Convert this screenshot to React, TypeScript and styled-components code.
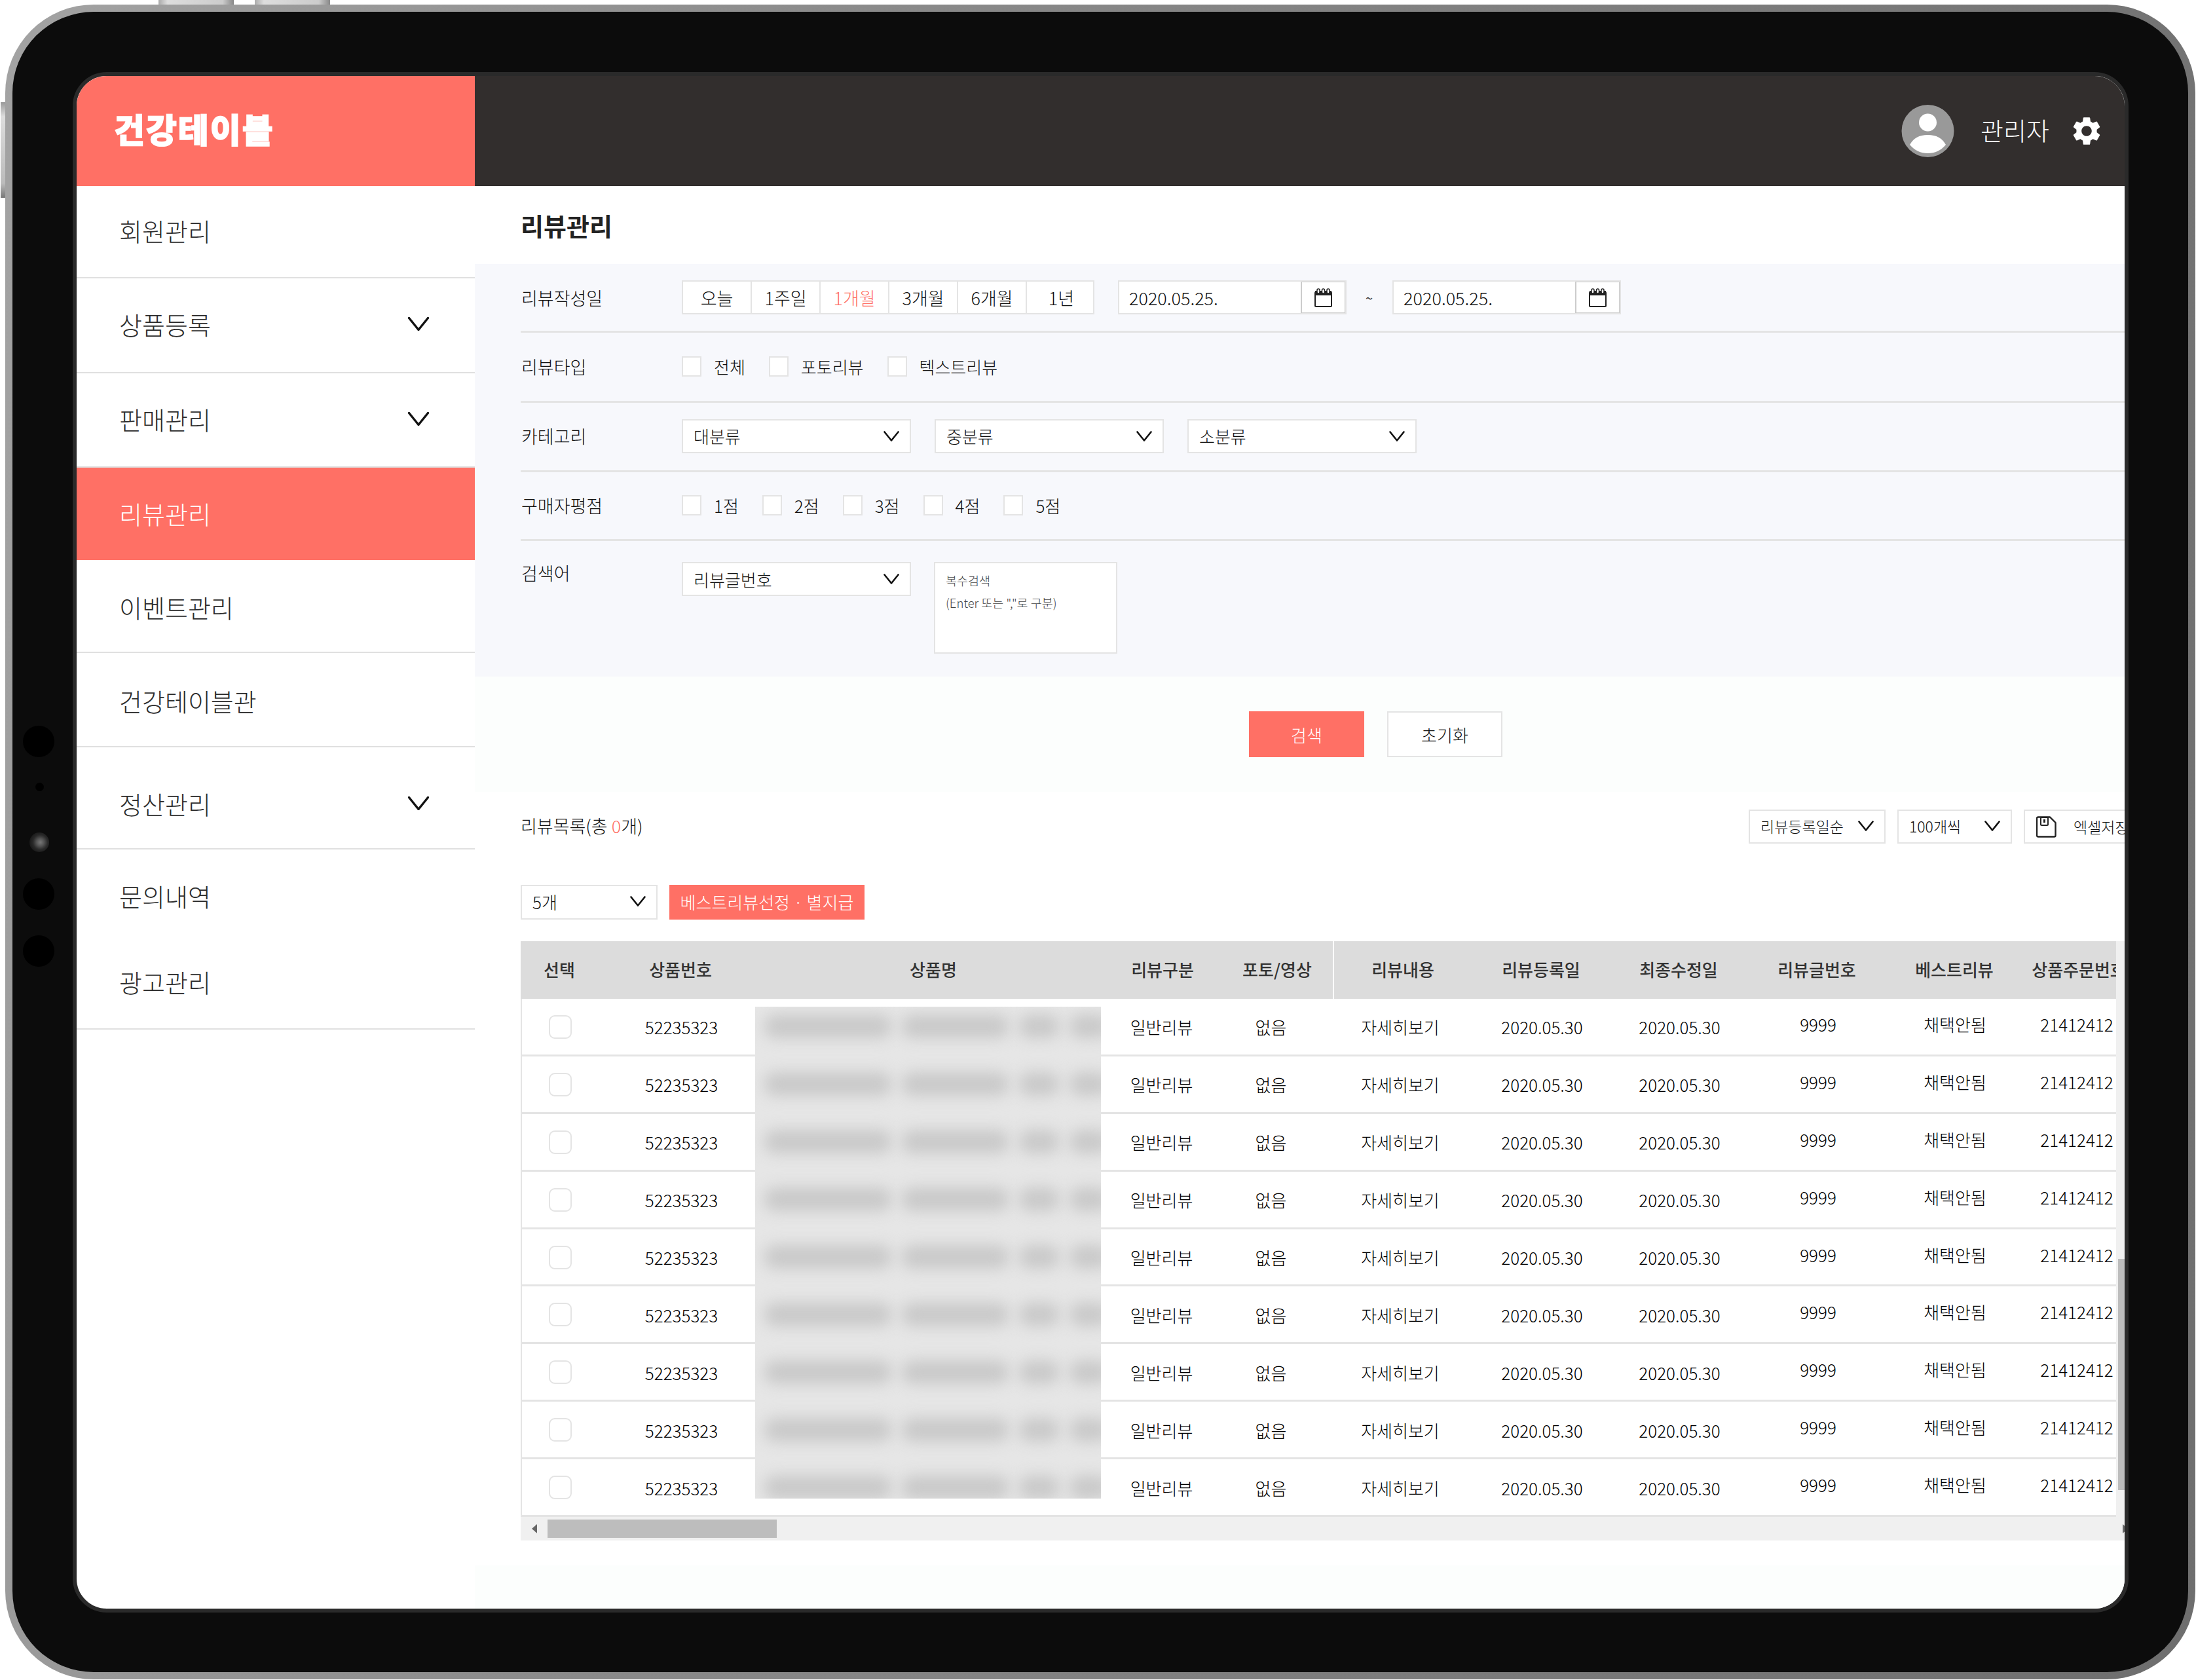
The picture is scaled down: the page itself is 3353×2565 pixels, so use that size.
import styled, {createGlobalStyle} from "styled-components";
import {MdSettings} from "react-icons/md";

const CORAL = "#ff7065";
const LINE = "#e4e4e4";

const GlobalStyle = createGlobalStyle`
  * { box-sizing: border-box; }
  body {
    margin: 0;
    background: #fff;
    color: #111;
    font-family: "Noto Sans CJK KR", "Noto Sans", sans-serif;
    font-weight: 400;
  }
`;

const Chevron = ({w = 24, h = 16, stroke = 2.6}: {w?: number; h?: number; stroke?: number}) => (
  <svg width={w} height={h} viewBox={`0 0 ${w} ${h}`} fill="none">
    <polyline
      points={`1.5,1.5 ${w / 2},${h - 1.5} ${w - 1.5},1.5`}
      stroke="#111"
      strokeWidth={stroke}
      strokeLinecap="round"
      strokeLinejoin="round"
    />
  </svg>
);

const CalendarIcon = () => (
  <svg width="27" height="29" viewBox="0 0 27 29" fill="none" stroke="#222">
    <rect x="1" y="6" width="25" height="22" rx="1" strokeWidth="2"/>
    <rect x="1" y="4" width="25" height="7" fill="#222" stroke="none"/>
    <rect x="4" y="1" width="4" height="7" rx="2" fill="#fff" strokeWidth="1.5"/>
    <rect x="11.5" y="1" width="4" height="7" rx="2" fill="#fff" strokeWidth="1.5"/>
    <rect x="19" y="1" width="4" height="7" rx="2" fill="#fff" strokeWidth="1.5"/>
  </svg>
);

const SaveIcon = () => (
  <svg width="31" height="33" viewBox="0 0 31 33" fill="none" stroke="#222" strokeWidth="2.4">
    <path d="M3 1.5 H21 L29.5 10 V29.5 a2 2 0 0 1 -2 2 H3 a2 2 0 0 1 -2 -2 V3.5 a2 2 0 0 1 2 -2 Z" strokeLinejoin="round"/>
    <rect x="7" y="2" width="11" height="12" rx="1.5" strokeWidth="2"/>
    <rect x="11" y="5" width="3" height="5" fill="#222" stroke="none"/>
  </svg>
);

const Avatar = () => (
  <svg width="81" height="80" viewBox="0 0 81 80">
    <circle cx="40.5" cy="40" r="40" fill="#999"/>
    <circle cx="40.5" cy="27" r="13.5" fill="#fff"/>
    <path d="M13 61 Q21 46 40.5 46 Q60 46 68 61 Q57 74 40.5 74 Q24 74 13 61 Z" fill="#fff"/>
  </svg>
);

const NAV = [
  {label: "회원관리", h: 141, dy: -2},
  {label: "상품등록", h: 145, dy: -2, arrow: true},
  {label: "판매관리", h: 144, dy: -2, arrow: true},
  {label: "리뷰관리", h: 141, dy: 0, active: true},
  {label: "이벤트관리", h: 142, dy: 1},
  {label: "건강테이블관", h: 144, dy: 1},
  {label: "정산관리", h: 156, dy: 8, arrow: true},
  {label: "문의내역", h: 138, dy: 2, noLine: true},
  {label: "광고관리", h: 137, dy: -4},
];

const PERIODS = ["오늘", "1주일", "1개월", "3개월", "6개월", "1년"];
const REVIEW_TYPES = ["전체", "포토리뷰", "텍스트리뷰"];
const RATINGS = ["1점", "2점", "3점", "4점", "5점"];
const CATEGORIES = ["대분류", "중분류", "소분류"];

const COLUMNS = [
  "선택", "상품번호", "상품명", "리뷰구분", "포토/영상", "리뷰내용",
  "리뷰등록일", "최종수정일", "리뷰글번호", "베스트리뷰", "상품주문번호",
];

const ROWS = Array.from({length: 9}, (_, i) => i);
const BLOBS = [194, 163, 61, 60];

export default function App() {
  return (
    <>
      <GlobalStyle/>
      <Device>
        <TopButton $left={234}/>
        <TopButton $left={381}/>
        <SideButton/>
        <Sensor $top={1101} $size={48} $left={27}/>
        <Sensor $top={1188} $size={13} $left={46}/>
        <Lens/>
        <Sensor $top={1334} $size={48} $left={27}/>
        <Sensor $top={1421} $size={48} $left={27}/>
        <Bezel>
          <Screen>
            <Sidebar>
              <Logo><LogoText>건강테이블</LogoText></Logo>
              {NAV.map((item) => (
                <NavItem key={item.label} $h={item.h} $dy={item.dy} $active={item.active} $noLine={item.noLine}>
                  {item.label}
                  {item.arrow ? <Chevron w={32} h={21} stroke={3.4}/> : undefined}
                </NavItem>
              ))}
            </Sidebar>
            <Main>
              <TopBar>
                <Avatar/>
                <AdminName>관리자</AdminName>
                <MdSettings size={52} color="#fff"/>
              </TopBar>
              <PageTitle>리뷰관리</PageTitle>
              <Filter>
                <FilterRow $h={105} $flat>
                  <FilterLabel>리뷰작성일</FilterLabel>
                  <PeriodGroup>
                    {PERIODS.map((p) => <Period key={p} $on={p === "1개월"}>{p}</Period>)}
                  </PeriodGroup>
                  <DateField>
                    <DateText>2020.05.25.</DateText>
                    <DateButton><CalendarIcon/></DateButton>
                  </DateField>
                  <Tilde>~</Tilde>
                  <DateField>
                    <DateText>2020.05.25.</DateText>
                    <DateButton><CalendarIcon/></DateButton>
                  </DateField>
                </FilterRow>
                <FilterRow $h={107}>
                  <FilterLabel>리뷰타입</FilterLabel>
                  <CheckGroup>
                    {REVIEW_TYPES.map((t) => <CheckItem key={t}><Check/>{t}</CheckItem>)}
                  </CheckGroup>
                </FilterRow>
                <FilterRow $h={106}>
                  <FilterLabel>카테고리</FilterLabel>
                  <SelectGroup>
                    {CATEGORIES.map((c) => <Select key={c} $w={350}>{c}<Chevron/></Select>)}
                  </SelectGroup>
                </FilterRow>
                <FilterRow $h={105}>
                  <FilterLabel>구매자평점</FilterLabel>
                  <CheckGroup>
                    {RATINGS.map((t) => <CheckItem key={t}><Check/>{t}</CheckItem>)}
                  </CheckGroup>
                </FilterRow>
                <SearchRow>
                  <SearchLabel>검색어</SearchLabel>
                  <Select $w={350}>리뷰글번호<Chevron/></Select>
                  <SearchBox>
                    <span>복수검색</span>
                    <span>(Enter 또는 ","로 구분)</span>
                  </SearchBox>
                </SearchRow>
              </Filter>
              <Actions>
                <SearchButton>검색</SearchButton>
                <ResetButton>초기화</ResetButton>
              </Actions>
              <ListHead>
                <ListTitle>리뷰목록(총 <Accent>0</Accent>개)</ListTitle>
                <ListControls>
                  <SmallSelect $w={209}>리뷰등록일순<Chevron/></SmallSelect>
                  <SmallSelect $w={175}>100개씩<Chevron/></SmallSelect>
                  <ExcelButton><SaveIcon/>엑셀저장</ExcelButton>
                </ListControls>
              </ListHead>
              <Toolbar>
                <ToolbarSelect $w={209} $h={53}>5개<Chevron/></ToolbarSelect>
                <BestButton>베스트리뷰선정 · 별지급</BestButton>
              </Toolbar>
              <TableWrap>
                <TableView>
                  <HeadRow>
                    {COLUMNS.map((c) => <HeadCell key={c} $divider={c === "포토/영상"}>{c}</HeadCell>)}
                  </HeadRow>
                  {ROWS.map((i) => (
                    <BodyRow key={i}>
                      <Cell $pr={3}><RowCheck/></Cell>
                      <Cell $pr={3}>52235323</Cell>
                      <Cell/>
                      <Cell $pr={9}>일반리뷰</Cell>
                      <Cell $pr={25}>없음</Cell>
                      <Cell $pr={14}>자세히보기</Cell>
                      <Cell $pr={3}>2020.05.30</Cell>
                      <Cell $pr={3}>2020.05.30</Cell>
                      <Cell $raised $pr={2}>9999</Cell>
                      <Cell $raised $pr={4}>채택안됨</Cell>
                      <Cell $raised $pr={4}>21412412</Cell>
                    </BodyRow>
                  ))}
                </TableView>
                <BlurPanel>
                  {ROWS.map((i) => (
                    <BlurRow key={i}>
                      {BLOBS.map((w, j) => <Blob key={j} $w={w}/>)}
                    </BlurRow>
                  ))}
                </BlurPanel>
                <VTrack><VThumb/></VTrack>
                <HTrack>
                  <HArrow/>
                  <HThumb/>
                  <HArrow $right/>
                </HTrack>
              </TableWrap>
              <BottomBand/>
            </Main>
          </Screen>
        </Bezel>
      </Device>
    </>
  );
}

const Device = styled.div`
  position: relative;
  width: 3344px;
  height: 2557px;
  margin: 7px 0 0 8px;
  padding: 11px;
  border-radius: 135px;
  background: linear-gradient(100deg, #a3a3a3 0%, #8a8a8a 35%, #6e6e6e 100%);
`;

const TopButton = styled.div<{$left: number}>`
  position: absolute;
  top: -7px;
  left: ${(p) => p.$left}px;
  width: 115px;
  height: 7px;
  background: linear-gradient(90deg, #aaa, #ddd 12%, #ccc 85%, #888);
`;

const SideButton = styled.div`
  position: absolute;
  top: 149px;
  left: -7px;
  width: 7px;
  height: 146px;
  background: linear-gradient(180deg, #999, #ddd 15%, #bbb 85%, #777);
`;

const Sensor = styled.div<{$top: number; $left: number; $size: number}>`
  position: absolute;
  z-index: 1;
  top: ${(p) => p.$top}px;
  left: ${(p) => p.$left}px;
  width: ${(p) => p.$size}px;
  height: ${(p) => p.$size}px;
  border-radius: 50%;
  background: #000;
`;

const Lens = styled.div`
  position: absolute;
  z-index: 1;
  top: 1264px;
  left: 37px;
  width: 30px;
  height: 30px;
  border-radius: 50%;
  background: radial-gradient(circle at 55% 50%, #777 0%, #555 25%, #2a2a2a 50%, #1c1c1c 70%, #141414 100%);
`;

const Bezel = styled.div`
  width: 3322px;
  height: 2535px;
  border-radius: 124px;
  background: #0c0c0c;
  padding: 92px 91px 91px 92px;
`;

const Screen = styled.div`
  display: flex;
  width: 3139px;
  height: 2352px;
  border: 6px solid #2a2a2a;
  border-radius: 52px;
  overflow: hidden;
  background: #fff;
`;

const Sidebar = styled.aside`
  flex: none;
  width: 608px;
  display: flex;
  flex-direction: column;
`;

const Logo = styled.div`
  height: 168px;
  padding: 0 0 8px 57px;
  display: flex;
  align-items: center;
  background: ${CORAL};
`;

const LogoText = styled.span`
  color: #fff;
  font-size: 51px;
  font-weight: 900;
  letter-spacing: 2px;
  -webkit-text-stroke: 1.5px #fff;
`;

const NavItem = styled.div<{$h: number; $dy: number; $active?: boolean; $noLine?: boolean}>`
  height: ${(p) => p.$h}px;
  padding: ${(p) => Math.max(p.$dy, 0) * 2}px 70px ${(p) => Math.max(-p.$dy, 0) * 2}px 65px;
  display: flex;
  align-items: center;
  justify-content: space-between;
  font-size: 38px;
  font-weight: 300;
  color: ${(p) => (p.$active ? "#fff" : "#2c2c2c")};
  background: ${(p) => (p.$active ? CORAL : "#fff")};
  border-bottom: 2px solid ${(p) => (p.$noLine || p.$active ? "transparent" : "#e0e0e0")};
`;

const Main = styled.main`
  flex: 1;
  min-width: 0;
  overflow: hidden;
  display: flex;
  flex-direction: column;
`;

const TopBar = styled.header`
  flex: none;
  height: 168px;
  padding-right: 32px;
  display: flex;
  align-items: center;
  justify-content: flex-end;
  background: #322e2d;
`;

const AdminName = styled.span`
  margin: 0 31px 5px 40px;
  color: #fff;
  font-size: 38px;
  font-weight: 300;
`;

const PageTitle = styled.h1`
  flex: none;
  height: 119px;
  margin: 0;
  padding-left: 70px;
  display: flex;
  align-items: center;
  font-size: 38px;
  font-weight: 700;
  color: #222;
`;

const Filter = styled.section`
  flex: none;
  padding-left: 70px;
  background: #f7f8fc;
`;

const FilterRow = styled.div<{$h: number; $flat?: boolean}>`
  height: ${(p) => p.$h}px;
  padding-bottom: ${(p) => (p.$flat ? 0 : 2)}px;
  display: flex;
  align-items: center;
  border-bottom: 3px solid ${LINE};
`;

const FilterLabel = styled.div`
  flex: none;
  width: 246px;
  padding-left: 1px;
  font-size: 27px;
  font-weight: 300;
`;

const PeriodGroup = styled.div`
  display: grid;
  grid-template-columns: repeat(6, 105px);
  width: 630px;
  height: 52px;
  background: #fff;
  border: 2px solid ${LINE};
`;

const Period = styled.div<{$on?: boolean}>`
  display: flex;
  align-items: center;
  justify-content: center;
  font-size: 27px;
  font-weight: 300;
  color: ${(p) => (p.$on ? CORAL : "#111")};
  border-right: 2px solid ${LINE};
  &:last-child { border-right: 0; }
`;

const DateField = styled.div`
  width: 349px;
  height: 52px;
  margin-left: 36px;
  display: flex;
  background: #fff;
  border: 2px solid ${LINE};
`;

const DateText = styled.div`
  flex: 1;
  padding-left: 15px;
  display: flex;
  align-items: center;
  font-size: 27px;
  font-weight: 300;
`;

const DateButton = styled.div`
  flex: none;
  width: 68px;
  display: flex;
  align-items: center;
  justify-content: center;
  border: 1px solid #ccc;
  border-left-width: 2px;
`;

const Tilde = styled.span`
  margin: 0 -6px 0 29px;
  font-size: 20px;
  color: #333;
`;

const CheckGroup = styled.div`
  display: flex;
  gap: 36px;
`;

const CheckItem = styled.label`
  display: flex;
  align-items: center;
  gap: 19px;
  font-size: 26px;
  font-weight: 300;
`;

const Check = styled.span`
  width: 30px;
  height: 31px;
  background: #fff;
  border: 2px solid ${LINE};
`;

const SelectGroup = styled.div`
  display: flex;
  gap: 36px;
`;

const Select = styled.div<{$w: number; $h?: number}>`
  flex: none;
  width: ${(p) => p.$w}px;
  height: ${(p) => p.$h ?? 52}px;
  padding: 0 16px;
  display: flex;
  align-items: center;
  justify-content: space-between;
  background: #fff;
  border: 2px solid ${LINE};
  font-size: 26px;
  font-weight: 300;
`;

const SearchRow = styled.div`
  height: 207px;
  padding-top: 32px;
  display: flex;
  align-items: flex-start;
`;

const SearchLabel = styled(FilterLabel)`
  margin-top: -3px;
`;

const SearchBox = styled.div`
  width: 280px;
  height: 140px;
  margin-left: 35px;
  padding: 14px 16px;
  display: flex;
  flex-direction: column;
  gap: 9px;
  background: #fff;
  border: 2px solid ${LINE};
  font-size: 18.5px;
  font-weight: 300;
  color: #444;
  line-height: 25px;
`;

const Actions = styled.div`
  flex: none;
  height: 176px;
  padding: 53px 0 0 1182px;
  display: flex;
  gap: 35px;
  background: #fcfefd;
`;

const SearchButton = styled.div`
  width: 176px;
  height: 70px;
  display: flex;
  align-items: center;
  justify-content: center;
  background: ${CORAL};
  color: #fff;
  font-size: 26px;
  font-weight: 300;
`;

const ResetButton = styled(SearchButton)`
  background: #fff;
  color: #111;
  border: 2px solid ${LINE};
`;

const ListHead = styled.div`
  flex: none;
  height: 123px;
  margin-right: -36px;
  padding: 27px 0 0 70px;
  display: flex;
  justify-content: space-between;
  align-items: flex-start;
`;

const ListTitle = styled.div`
  height: 48px;
  display: flex;
  align-items: center;
  white-space: pre;
  font-size: 27px;
  font-weight: 300;
`;

const Accent = styled.span`
  color: ${CORAL};
`;

const ListControls = styled.div`
  display: flex;
  gap: 18px;
`;

const SmallSelect = styled(Select)`
  padding-bottom: 3px;
  font-size: 23px;
`;

const ToolbarSelect = styled(Select)`
  padding-bottom: 3px;
`;

const ExcelButton = styled.div`
  width: 190px;
  height: 52px;
  padding-left: 17px;
  display: flex;
  align-items: center;
  gap: 26px;
  border: 2px solid ${LINE};
  font-size: 23px;
  font-weight: 300;
`;

const Toolbar = styled.div`
  flex: none;
  margin: 19px 0 33px 70px;
  display: flex;
  gap: 18px;
`;

const BestButton = styled.div`
  width: 298px;
  height: 53px;
  padding-bottom: 3px;
  display: flex;
  align-items: center;
  justify-content: center;
  background: ${CORAL};
  color: #fff;
  font-size: 26px;
  font-weight: 300;
`;

const TableWrap = styled.div`
  position: relative;
  flex: none;
  margin-left: 70px;
`;

const TableView = styled.div`
  width: 2436px;
  overflow: hidden;
`;

const GRID = "120px 250px 522px 178px 172px 212px 210px 210px 212px 208px 164px";

const HeadRow = styled.div`
  width: 2462px;
  height: 88px;
  display: grid;
  grid-template-columns: ${GRID} 4px;
  background: #dcdcdc;
`;

const HeadCell = styled.div<{$divider?: boolean}>`
  display: flex;
  align-items: center;
  justify-content: center;
  padding-bottom: 3px;
  white-space: nowrap;
  font-size: 26px;
  font-weight: 500;
  color: #333;
  border-right: 2px solid ${(p) => (p.$divider ? "#fff" : "transparent")};
  &:last-child { padding-left: 8px; }
`;

const BodyRow = styled.div`
  width: 2458px;
  height: 87.9px;
  display: grid;
  grid-template-columns: ${GRID};
  border-left: 2px solid ${LINE};
  border-bottom: 3px solid ${LINE};
`;

const Cell = styled.div<{$raised?: boolean; $pr?: number}>`
  display: flex;
  align-items: center;
  justify-content: center;
  padding: ${(p) => (p.$raised ? "0" : "1px")} ${(p) => p.$pr ?? 0}px ${(p) => (p.$raised ? "8px" : "0")} 0;
  font-size: 26px;
  font-weight: 300;
  color: #000;
`;

const RowCheck = styled.span`
  width: 35px;
  height: 36px;
  border: 2px solid ${LINE};
  border-radius: 9px;
`;

const BlurPanel = styled.div`
  position: absolute;
  top: 100px;
  left: 358px;
  width: 528px;
  height: 751px;
  overflow: hidden;
  background: #e6e6e6;
`;

const BlurRow = styled.div`
  height: 88px;
  padding: 12px 0 0 14px;
  display: flex;
  gap: 16px;
`;

const Blob = styled.div<{$w: number}>`
  flex: none;
  width: ${(p) => p.$w}px;
  height: 36px;
  border-radius: 16px;
  background: #c9c9c9;
  filter: blur(11px);
`;

const VTrack = styled.div`
  position: absolute;
  top: 0;
  right: 0;
  bottom: 36px;
  width: 13px;
  background: #f0f0f0;
`;

const VThumb = styled.div`
  margin: 485px 0 0 3px;
  width: 10px;
  height: 353px;
  background: #bdbdbd;
`;

const HTrack = styled.div`
  position: relative;
  height: 36px;
  padding-left: 17px;
  display: flex;
  align-items: center;
  background: #f0f0f0;
`;

const HArrow = styled.span<{$right?: boolean}>`
  width: 0;
  height: 0;
  border-top: 7px solid transparent;
  border-bottom: 7px solid transparent;
  border-right: ${(p) => (p.$right ? "0" : "8px solid #666")};
  border-left: ${(p) => (p.$right ? "8px solid #666" : "0")};
  margin-left: ${(p) => (p.$right ? "auto" : "0")};
  margin-right: ${(p) => (p.$right ? "-5px" : "0")};
`;

const HThumb = styled.div`
  width: 350px;
  height: 28px;
  margin-left: 16px;
  background: #bdbdbd;
`;

const BottomBand = styled.div`
  flex: 1;
  margin-top: 38px;
  background: #fcfefd;
`;
